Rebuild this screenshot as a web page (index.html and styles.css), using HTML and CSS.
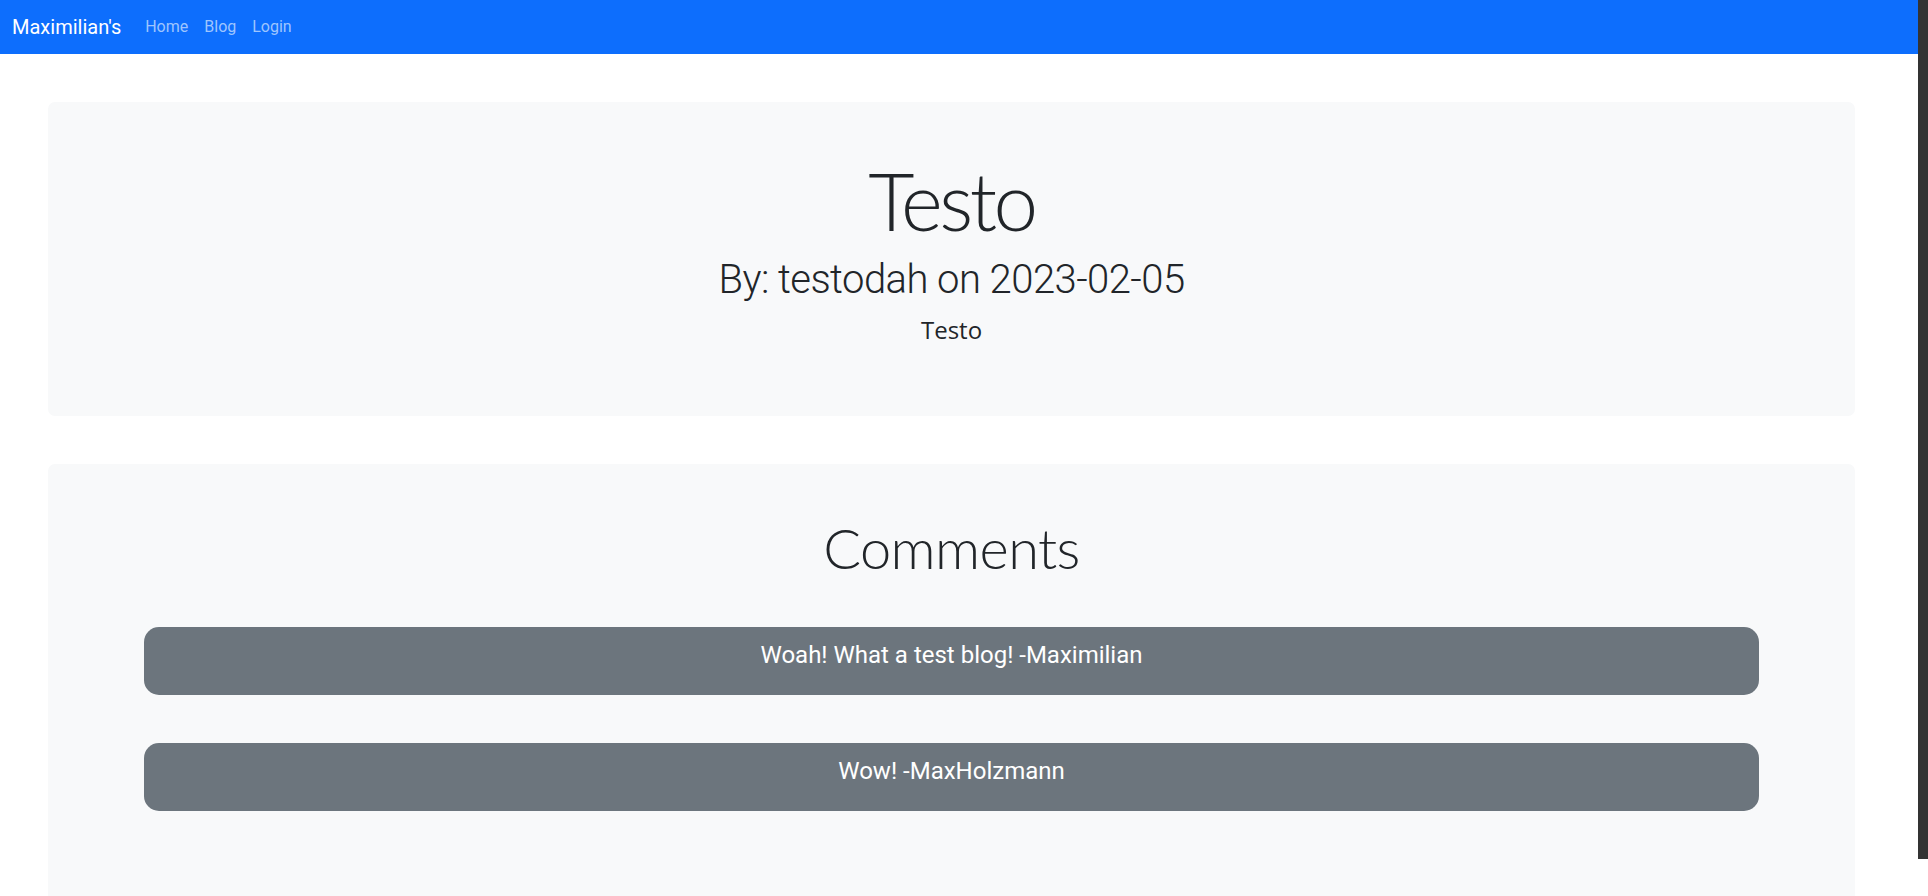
FILE: index.html
```html
<!DOCTYPE html>
<html lang="en">
<head>
<meta charset="utf-8">
<title>Testo</title>
<link rel="stylesheet" href="styles.css">
</head>
<body>
<nav class="navbar">
  <a class="brand" href="#">Maximilian's</a>
  <ul class="nav-links">
    <li><a href="#">Home</a></li>
    <li><a href="#">Blog</a></li>
    <li><a href="#">Login</a></li>
  </ul>
</nav>
<main class="page">
  <section class="card post">
    <h1 class="display-1">Testo</h1>
    <h2 class="display-6">By: testodah on 2023-02-05</h2>
    <p class="fs-4">Testo</p>
  </section>
  <section class="card comments">
    <h2 class="display-4">Comments</h2>
    <div class="comment"><p>Woah! What a test blog! -Maximilian</p></div>
    <div class="comment"><p>Wow! -MaxHolzmann</p></div>
  </section>
</main>
<div class="scroll-thumb"></div>
</body>
</html>
```
FILE: styles.css
```css
* { box-sizing: border-box; }
html, body {
  margin: 0;
  padding: 0;
  overflow: hidden;
  background: #fff;
}
body {
  font-family: "Open Sans", "Noto Sans", "Liberation Sans", sans-serif;
  color: #212529;
  font-size: 16px;
  line-height: 1.5;
}
.navbar {
  height: 54px;
  width: 1918px;
  background: #0d6efd;
  display: flex;
  align-items: center;
  padding: 0 12px;
}
.brand {
  color: #fff;
  text-decoration: none;
  font-size: 20px;
  margin-right: 16px;
  font-family: Roboto, sans-serif;
}
.nav-links {
  list-style: none;
  margin: 0;
  padding: 0;
  display: flex;
}
.nav-links a {
  display: block;
  padding: 0 8px;
  color: #9ec5fe;
  text-decoration: none;
  font-family: Roboto, sans-serif;
  font-size: 16px;
}
.page {
  width: 1903px;
  padding: 48px 48px 0;
  display: flex;
  flex-direction: column;
  gap: 48px;
}
.card {
  background: #f8f9fa;
  border-radius: 7px;
  padding: 50px 48px 48px;
  text-align: center;
}
.post { height: 314px; }
.comments { min-height: 480px; padding-left: 96px; padding-right: 96px; }
h1, h2, p { margin: 0; }
.display-1 {
  font-family: Lato, sans-serif;
  font-size: 80px;
  font-weight: 300;
  line-height: 1.2;
  letter-spacing: -3.5px;
  margin-bottom: 8px;
}
.display-6 {
  font-family: Roboto, sans-serif;
  font-size: 40px;
  font-weight: 300;
  line-height: 1.2;
  letter-spacing: -0.55px;
  margin-bottom: 8px;
}
.display-4 {
  font-family: Lato, sans-serif;
  font-size: 56px;
  font-weight: 300;
  line-height: 1.2;
  letter-spacing: -0.6px;
  margin-bottom: 46px;
}
.fs-4 {
  font-size: 24px;
  line-height: 1.5;
}
.comment {
  background: #6c757d;
  color: #fff;
  border-radius: 15px;
  padding: 10px 8px 22px;
  margin-bottom: 48px;
}
.comment p {
  font-family: Roboto, sans-serif;
  font-size: 24px;
  line-height: 1.5;
}
.scroll-thumb {
  position: fixed;
  top: 0;
  right: 0;
  width: 10px;
  height: 859px;
  background: #333;
}
```
